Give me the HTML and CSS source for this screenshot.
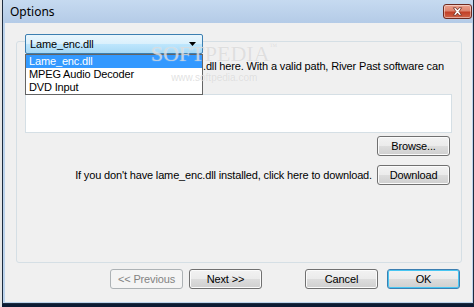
FILE: index.html
```html
<!DOCTYPE html>
<html lang="en">
<head>
  <meta charset="UTF-8" />
  <title>Options</title>
  <link rel="stylesheet" href="styles.css">
</head>
<body>
  <div class="window">
    <div class="titlebar">
      <span class="title">Options</span>
      <span class="close">
        <svg width="29" height="15" viewBox="0 0 29 15">
          <path d="M10 3.5 L13 3.5 L14.5 5.8 L16 3.5 L19 3.5 L16.2 7.5 L19 11.5 L16 11.5 L14.5 9.2 L13 11.5 L10 11.5 L12.8 7.5 Z" fill="#fff" stroke="#6b2418" stroke-width="0.8"/>
        </svg>
      </span>
    </div>
    <div class="client">
      <div class="group">
        <div class="combo-wrap">
          <div class="combo">
            <span>Lame_enc.dll</span>
            <svg width="7" height="4" viewBox="0 0 7 4"><path d="M0 0 H7 L3.5 4 Z" fill="#000"/></svg>
          </div>
          <ul class="combo-list">
            <li class="selected">Lame_enc.dll</li>
            <li>MPEG Audio Decoder</li>
            <li>DVD Input</li>
          </ul>
        </div>
        <p class="hint">.dll here. With a valid path, River Past software can</p>
        <div class="path-box"></div>
        <div class="row">
          <button class="btn">Browse...</button>
        </div>
        <div class="row download-row">
          <span>If you don't have lame_enc.dll installed, click here to download.</span>
          <button class="btn">Download</button>
        </div>
      </div>
      <div class="footer">
        <button class="btn" disabled>&lt;&lt; Previous</button>
        <button class="btn next">Next &gt;&gt;</button>
        <button class="btn cancel">Cancel</button>
        <button class="btn default">OK</button>
      </div>
      <div class="watermark">
        <span class="wm-big">SOFTPEDIA<sup>™</sup></span>
        <span class="wm-small">www.softpedia.com</span>
      </div>
    </div>
  </div>
</body>
</html>
```

FILE: styles.css
```css
body {
  margin: 0;
  width: 474px;
  height: 307px;
  overflow: hidden;
  background: linear-gradient(to right, #e6e6e6 2px, #0c1b33 2px);
  font-family: "Liberation Sans", Arial, sans-serif;
  font-size: 11px;
  letter-spacing: -0.15px;
  color: #000;
}
.window {
  margin-left: 2px;
  width: 470px;
  height: 303px;
  border: 1px solid #1d2c40;
  border-top: none;
  background: #bcd3ec;
  display: flex;
  flex-direction: column;
}
.titlebar {
  height: 23px;
  flex: none;
  display: flex;
  align-items: flex-start;
  justify-content: space-between;
  background: linear-gradient(#c6daf0, #b4cbe7);
}
.title {
  font-family: "Noto Sans", sans-serif;
  font-size: 12px;
  letter-spacing: 0;
  margin: 3px 0 0 7px;
  color: #000;
}
.close {
  margin: 4px 1px 0 0;
  width: 29px;
  height: 15px;
  border: 1px solid #6e2a20;
  border-radius: 3px;
  box-sizing: border-box;
  background: linear-gradient(#eba08d 0%, #dc8570 45%, #c23f27 55%, #d0654a 100%);
  box-shadow: inset 0 0 0 1px rgba(255,255,255,0.45);
  display: flex;
  align-items: center;
  justify-content: center;
}
.close svg {
  display: block;
  margin-top: -1px;
}
.client {
  position: relative;
  flex: 1;
  margin: 0 1px 1px 2px;
  background: #f0f0f0;
  display: flex;
  flex-direction: column;
}
.group {
  margin: 18px 10px 0 11px;
  height: 222px;
  box-sizing: border-box;
  border: 1px solid #d5dfe5;
  border-radius: 3px;
  padding: 0 9px 0 8px;
}
.combo-wrap {
  position: relative;
  width: 178px;
  margin-top: -8px;
}
.combo {
  height: 20px;
  box-sizing: border-box;
  border: 1px solid #3c7fb1;
  border-radius: 2px;
  background: linear-gradient(#eaf6fd 0%, #d9f0fc 50%, #bee6fd 50%, #a7d9f5 100%);
  display: flex;
  align-items: center;
  justify-content: space-between;
  padding: 0 6px 0 4px;
}
.combo-list {
  position: absolute;
  top: 20px;
  left: 0;
  width: 178px;
  box-sizing: border-box;
  margin: 0;
  padding: 0;
  list-style: none;
  background: #fff;
  border: 1px solid #646464;
  z-index: 2;
}
.combo-list li {
  height: 13px;
  line-height: 13px;
  padding-left: 3px;
}
.combo-list li.selected {
  background: #3399ff;
  color: #fff;
}
.hint {
  margin: 6px 0 0 178px;
  line-height: 13px;
  white-space: nowrap;
}
.path-box {
  margin-top: 21px;
  width: 427px;
  height: 39px;
  box-sizing: border-box;
  background: #fff;
  border: 1px solid #d5dfe5;
}
.row {
  display: flex;
  justify-content: flex-end;
  align-items: center;
  gap: 5px;
  margin: 3px 2px 0 0;
}
.download-row {
  margin-top: 9px;
}
.btn {
  width: 73px;
  height: 20px;
  padding: 0;
  box-sizing: border-box;
  border: 1px solid #707070;
  border-radius: 3px;
  background: linear-gradient(#f2f2f2 0%, #ebebeb 50%, #dddddd 50%, #cfcfcf 100%);
  box-shadow: inset 0 0 0 1px #fbfbfb;
  font-family: inherit;
  font-size: 11px;
  letter-spacing: inherit;
  color: #000;
}
.btn:disabled {
  border-color: #adb2b5;
  background: #f4f4f4;
  box-shadow: none;
  color: #838383;
}
.btn.default {
  border-color: #3c7fb1;
  box-shadow: inset 0 0 0 1px #48c6f2;
}
.footer {
  display: flex;
  justify-content: flex-end;
  margin: 6px 12px 0 0;
}
.footer .next {
  margin-left: 6px;
}
.footer .cancel {
  margin-left: 43px;
}
.footer .default {
  margin-left: 9px;
}
.watermark {
  position: absolute;
  top: 19px;
  left: 146px;
  display: flex;
  flex-direction: column;
  align-items: center;
  pointer-events: none;
  z-index: 3;
  color: rgba(205, 205, 205, 0.6);
  text-shadow: 0 0 1px rgba(255, 255, 255, 0.7);
  letter-spacing: 0;
}
.wm-big {
  font-family: "Liberation Serif", serif;
  font-size: 22px;
  line-height: 24px;
}
.wm-big sup {
  font-size: 8px;
  vertical-align: top;
  line-height: 10px;
}
.wm-small {
  font-size: 10px;
  margin-top: 6px;
}
```
